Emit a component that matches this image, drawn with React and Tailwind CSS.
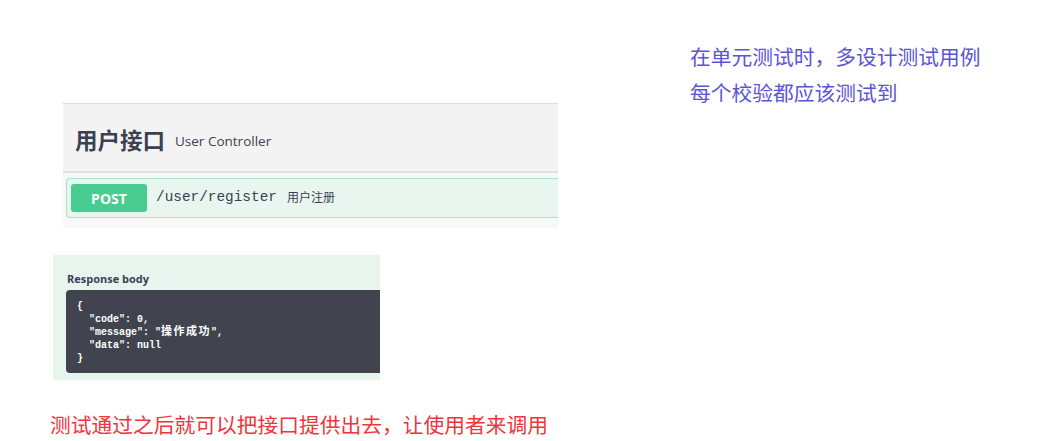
import React from 'react';

const cjk = { fontFamily: '"Open Sans", "Noto Sans CJK SC", sans-serif' };
const mono = { fontFamily: '"Liberation Mono", "Noto Sans CJK SC", monospace' };

function ApiPanel() {
  return (
    <div className="w-[495px] ml-[63px] bg-[#f8f8f8]">
      {/* Tag header */}
      <div className="h-[70px] border-t border-[#dcdcdc] border-b-2 border-b-[#e2e2e2] bg-[#f3f3f3] flex items-center pl-[12px] pt-[6px] gap-[10px]">
        <span className="text-[22.5px] font-bold text-[#3b4151]">用户接口</span>
        <span className="text-[13.5px] text-[#3b4151] pt-[2px]">User Controller</span>
      </div>
      {/* Operation row */}
      <div className="pt-[5px] pb-[10px] pl-[3px]">
        <div className="h-[40px] flex items-center border border-r-0 border-[#a8e3c7] bg-[#e8f6ef] rounded-l-[4px] pl-[4px]">
          <div className="w-[76px] h-[28px] rounded-[3px] bg-[#49cc90] text-white text-[14px] font-bold flex items-center justify-center">
            POST
          </div>
          <span className="ml-[9px] text-[14.4px] text-[#3b4151]" style={mono}>/user/register</span>
          <span className="ml-[10px] text-[12px] text-[#3b4151]">用户注册</span>
        </div>
      </div>
    </div>
  );
}

function ResponseBody() {
  return (
    <div className="w-[327px] h-[125px] ml-[53px] mt-[27px] bg-[#e8f5ef] pt-[16px] pl-[14px]">
      <div className="text-[11px] font-bold text-[#3b4151] leading-[16px]">Response body</div>
      <div className="mt-[3px] -ml-[1px] h-[83px] bg-[#41444e] rounded-l-[4px] pt-[10px] pl-[11px] text-[10px] font-bold text-white leading-[13px] whitespace-pre" style={mono}>
        <div>{'{'}</div>
        <div>{'  "code": 0,'}</div>
        <div>
          {'  "message": "'}
          <span className="text-[11px] tracking-[1.5px]">操作成功</span>
          {'",'}
        </div>
        <div>{'  "data": null'}</div>
        <div>{'}'}</div>
      </div>
    </div>
  );
}

export default function App() {
  return (
    <div className="w-[1051px] h-[441px] bg-white flex overflow-hidden" style={cjk}>
      <div className="w-[640px] pt-[103px]">
        <ApiPanel />
        <ResponseBody />
        <p className="mt-[31px] ml-[50px] text-[20.75px] leading-[28px] text-[#f0343c]">
          测试通过之后就可以把接口提供出去，让使用者来调用
        </p>
      </div>
      <div className="pt-[39px] pl-[50px] text-[20.75px] leading-[36px] text-[#5a55d6]">
        <p>在单元测试时，多设计测试用例</p>
        <p>每个校验都应该测试到</p>
      </div>
    </div>
  );
}
